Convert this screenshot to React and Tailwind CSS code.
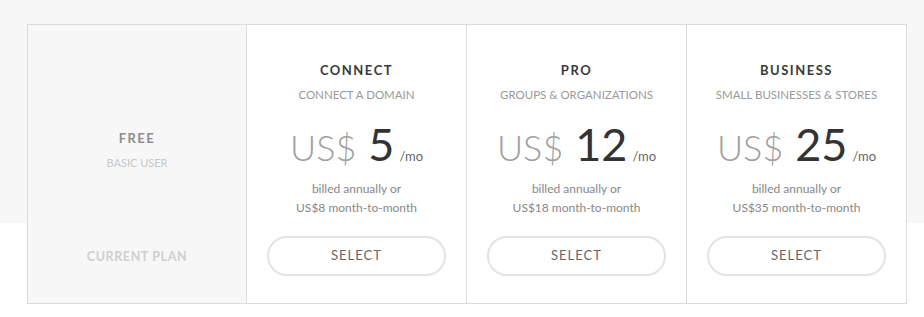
import React from "react";

const plans = [
  { name: "CONNECT", sub: "CONNECT A DOMAIN", price: "5", monthly: "US$8" },
  { name: "PRO", sub: "GROUPS & ORGANIZATIONS", price: "12", monthly: "US$18" },
  { name: "BUSINESS", sub: "SMALL BUSINESSES & STORES", price: "25", monthly: "US$35" },
];

export default function App() {
  return (
    <div
      className="h-[317px] w-[924px] bg-[linear-gradient(to_bottom,#f7f7f7_223px,#ffffff_223px)] pt-[24px] pl-[27px]"
      style={{ fontFamily: "Lato, 'Open Sans', Arial, sans-serif" }}
    >
      <div className="grid h-[280px] w-[880px] grid-cols-[219px_220px_220px_219px] border border-[#dcdcdc] bg-white">
        <div className="flex flex-col items-center border-r border-[#dcdcdc] bg-[#f7f7f7]">
          <div className="mt-[105px] text-[13px] font-bold leading-[16px] tracking-[1.5px] text-[#8e8e8e]">FREE</div>
          <div className="mt-[10px] text-[11px] leading-[14px] text-[#c8c8c8]">BASIC USER</div>
          <div className="mt-[79px] text-[12.5px] font-bold leading-[16px] tracking-[0.6px] text-[#cfcfcf]">CURRENT PLAN</div>
        </div>
        {plans.map((p, i) => (
          <div
            key={p.name}
            className={`flex flex-col items-center ${i < 2 ? "border-r border-[#dcdcdc]" : ""}`}
          >
            <div className="mt-[37px] text-[13px] font-bold leading-[16px] tracking-[1.5px] text-[#3a3a3a]">{p.name}</div>
            <div className="mt-[10px] text-[11.5px] leading-[14px] text-[#999]">{p.sub}</div>
            <div className="mt-[20px] flex items-baseline leading-none">
              <span className="text-[36px] font-light text-[#a0a0a0]">US$</span>
              <span className="ml-[12px] text-[45px] font-normal text-[#333]">{p.price}</span>
              <span className="ml-[5px] text-[13px] text-[#666]">/mo</span>
            </div>
            <div className="mt-[12px] text-center text-[12px] leading-[19px] text-[#888]">
              <div>billed annually or</div>
              <div>{p.monthly} month-to-month</div>
            </div>
            <button className="mt-[19px] h-[40px] w-[179px] rounded-full border-2 border-[#e3e3e3] bg-white text-[13px] tracking-[1px] text-[#666]">
              SELECT
            </button>
          </div>
        ))}
      </div>
    </div>
  );
}
